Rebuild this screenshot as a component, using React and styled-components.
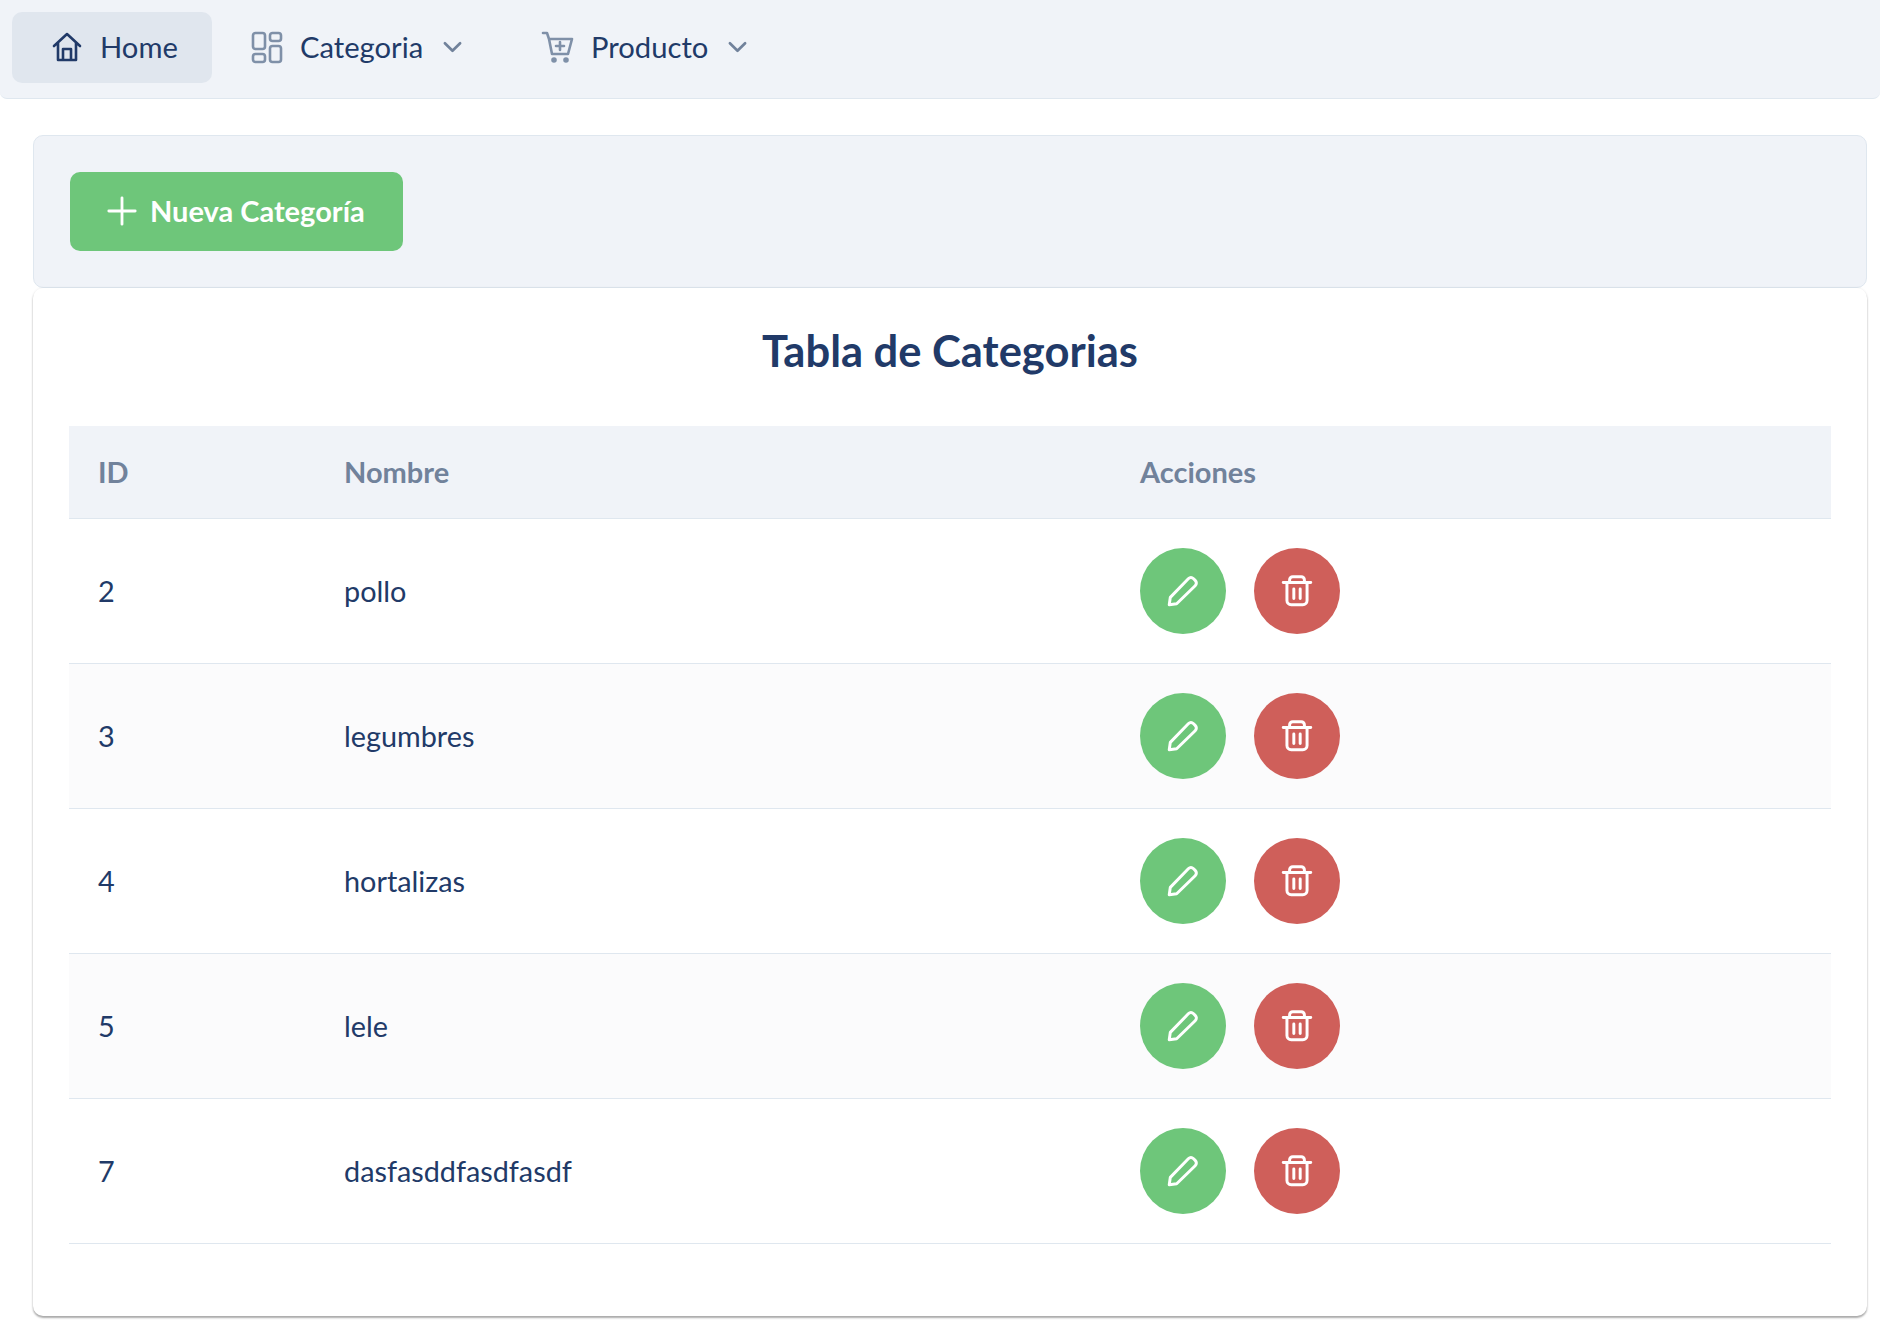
import React from "react";
import styled, { createGlobalStyle } from "styled-components";

const Global = createGlobalStyle`
  html, body { margin: 0; padding: 0; background: #fff; }
  body { font-family: Lato, "Liberation Sans", sans-serif; color: #213a68; }
  * { box-sizing: border-box; }
`;
const Page = styled.div`width: 1880px; height: 1336px; overflow: hidden;`;
const NavBar = styled.nav`
  height: 99px; background: #f0f3f8; border-bottom: 1px solid #dfe7ef;
  border-radius: 0 0 7px 7px; padding: 12px 12px 0; display: flex; gap: 0;
`;
const NavItem = styled.a`
  height: 71px; border-radius: 10px; display: flex; align-items: center;
  padding: 0 0 2px 38px; font-size: 29.2px; color: #213a68;
  background: ${p => (p.$active ? "#e0e6ee" : "transparent")};
  width: ${p => p.$w}px;
`;
const NavIcon = styled.svg`
  width: 34px; height: 34px; flex: none; margin-right: 16px; fill: none;
  stroke: ${p => p.$c || "#7f90a8"}; stroke-width: 2.6; stroke-linecap: round; stroke-linejoin: round;
`;
const Chevron = styled.svg`
  width: 19px; height: 12px; margin-left: 20px; fill: none; stroke: #71829b;
  stroke-width: 2.8; stroke-linecap: round; stroke-linejoin: round;
`;
const Main = styled.main`padding: 36px 13px 0 33px;`;
const Toolbar = styled.section`
  height: 153px; background: #f0f3f8; border: 1px solid #dfe7ef; border-radius: 10px;
  padding: 36px;
`;
const NewButton = styled.button`
  width: 333px; height: 79px; border: 0; border-radius: 10px; background: #6ec67a; color: #fff;
  font: 700 29px Lato, sans-serif; display: flex; align-items: center; gap: 12px; padding: 0 0 2px 36px;
`;
const PlusIcon = styled.svg`
  width: 32px; height: 32px; fill: none; stroke: #fff; stroke-width: 3; stroke-linecap: round;
`;
const Card = styled.section`
  height: 1028px; background: #fff; border-radius: 10px;
  box-shadow: 0 2px 2px 0 rgba(0,0,0,.32), 0 0 3px 0 rgba(0,0,0,.07);
  padding: 0 36px;
`;
const Title = styled.h2`
  margin: 0; height: 138px; display: flex; align-items: center; justify-content: center;
  font-size: 43.5px; font-weight: 700; color: #213a68; padding-bottom: 14px;
`;
const Table = styled.div`width: 100%;`;
const HeadRow = styled.div`
  display: grid; grid-template-columns: 246px 796px 1fr; height: 93px; align-items: center;
  background: #f0f3f8; border-bottom: 1px solid #dfe7ef; color: #71829b; font-size: 29px; font-weight: 700;
  padding: 0 0 2px 29px;
`;
const Row = styled.div`
  display: grid; grid-template-columns: 246px 796px 1fr; height: 145px; align-items: center;
  background: ${p => (p.$alt ? "#fbfbfc" : "#fff")}; border-bottom: 1px solid #dfe7ef; font-size: 28.8px;
  padding-left: 29px;
`;
const Actions = styled.div`display: flex; gap: 28px;`;
const RoundButton = styled.button`
  width: 86px; height: 86px; border-radius: 50%; border: 0; padding: 0;
  background: ${p => p.$bg}; display: flex; align-items: center; justify-content: center;
`;
const ActionIcon = styled.svg`
  width: 36px; height: 36px; fill: none; stroke: #fff; stroke-width: 2.8;
  stroke-linecap: round; stroke-linejoin: round;
`;

const rows = [[2,"pollo"],[3,"legumbres"],[4,"hortalizas"],[5,"lele"],[7,"dasfasddfasdfasdf"]];

export default function App() {
  return (
    <Page>
      <Global />
      <NavBar>
        <NavItem $active $w={200}>
          <NavIcon viewBox="0 0 34 34" $c="#213a68">
            <path d="M4 16 17 4l13 12M8 13v17h18V13M13 30V19h8v11" />
          </NavIcon>Home
        </NavItem>
        <NavItem $w={291}>
          <NavIcon viewBox="0 0 34 34">
            <rect x="3" y="3" width="12" height="16" rx="2.5" />
            <rect x="20" y="3" width="11" height="8" rx="2.5" />
            <rect x="3" y="24" width="12" height="8" rx="2.5" />
            <rect x="20" y="16" width="11" height="16" rx="2.5" />
          </NavIcon>Categoria<Chevron viewBox="0 0 20 12"><path d="M2 2l8 8 8-8" /></Chevron>
        </NavItem>
        <NavItem $w={284}>
          <NavIcon viewBox="0 0 34 34">
            <path d="M2 3h4l2 6 3 15h16l4-15H8" />
            <path d="M19 12v8M15 16h8" />
            <circle cx="13" cy="30" r="1.5" fill="#7f90a8" />
            <circle cx="25" cy="30" r="1.5" fill="#7f90a8" />
          </NavIcon>Producto<Chevron viewBox="0 0 20 12"><path d="M2 2l8 8 8-8" /></Chevron>
        </NavItem>
      </NavBar>
      <Main>
        <Toolbar>
          <NewButton>
            <PlusIcon viewBox="0 0 34 34"><path d="M17 3v28M3 17h28" /></PlusIcon>
            Nueva Categoría
          </NewButton>
        </Toolbar>
        <Card>
          <Title>Tabla de Categorias</Title>
          <Table>
            <HeadRow><span>ID</span><span>Nombre</span><span>Acciones</span></HeadRow>
            {rows.map(([id, name], i) => (
              <Row key={id} $alt={i % 2 === 1}>
                <span>{id}</span>
                <span>{name}</span>
                <Actions>
                  <RoundButton $bg="#6ec67a" aria-label="editar">
                    <ActionIcon viewBox="0 0 34 34">
                      <path d="M4 30l1-7L22 5.500c1.500-1.500 3.500-1.500 5 0l1.500 1.500c1.500 1.500 1.500 3.500 0 5L11 29z" />
                    </ActionIcon>
                  </RoundButton>
                  <RoundButton $bg="#cf5f5a" aria-label="borrar">
                    <ActionIcon viewBox="0 0 34 34">
                      <path d="M4 9h26M7.500 9v17a4 4 0 0 0 4 4h11a4 4 0 0 0 4-4V9M10 9V6.500a3 3 0 0 1 3-3h8a3 3 0 0 1 3 3V9M14 15v9M20 15v9" />
                    </ActionIcon>
                  </RoundButton>
                </Actions>
              </Row>
            ))}
          </Table>
        </Card>
      </Main>
    </Page>
  );
}
